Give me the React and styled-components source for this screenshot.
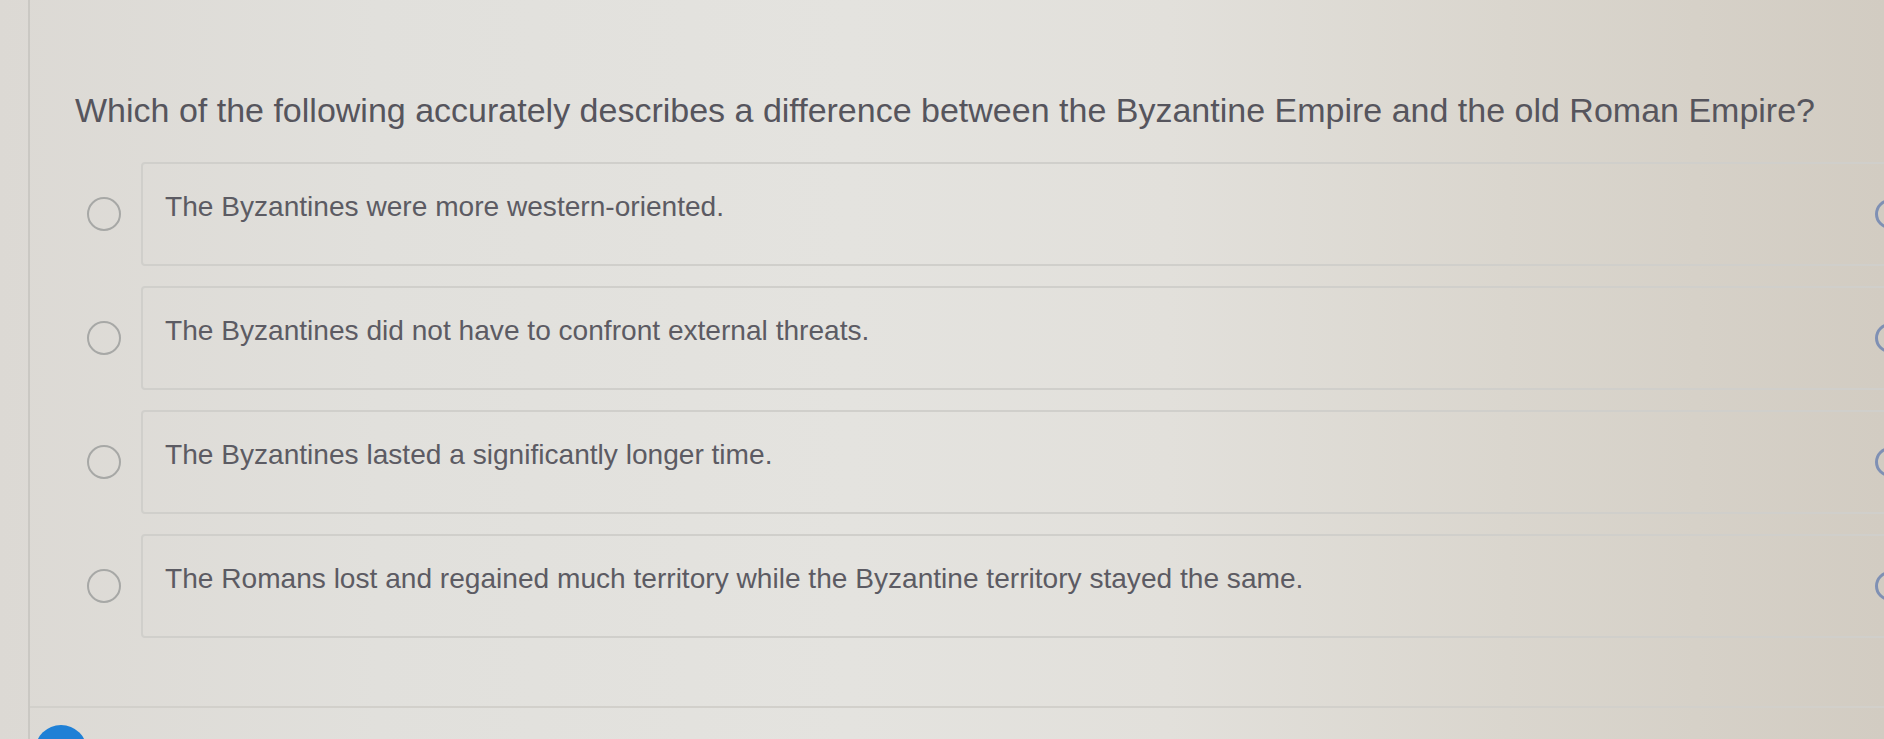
import React from "react";
import styled, { createGlobalStyle } from "styled-components";

const GlobalStyle = createGlobalStyle`
  html, body {
    margin: 0;
    padding: 0;
    height: 739px;
    overflow: hidden;
  }
  body {
    font-family: "Liberation Sans", Arial, sans-serif;
    background: linear-gradient(90deg, #dcd9d4 0%, #e1e0dc 20%, #e4e3df 45%, #e2e0db 62%, #dad6ce 80%, #d2ccc2 100%);
  }
`;

const Page = styled.div`
  display: flex;
  height: 739px;
  padding-left: 28px;
  box-sizing: border-box;
  overflow: hidden;
`;

const Main = styled.main`
  flex: 1;
  display: flex;
  flex-direction: column;
  border-left: 2px solid #cac8c3;
  min-width: 0;
`;

const Question = styled.h1`
  margin: 0;
  padding: 90px 0 0 45px;
  font-size: 34px;
  line-height: 40px;
  font-weight: 400;
  color: #56555d;
  white-space: nowrap;
`;

const OptionList = styled.div`
  display: flex;
  flex-direction: column;
  gap: 20px;
  margin-top: 32px;
  margin-right: -40px;
`;

const OptionRow = styled.label`
  display: flex;
  align-items: center;
  height: 104px;
`;

const Radio = styled.span`
  flex: none;
  width: 30px;
  height: 30px;
  margin-left: 57px;
  margin-right: 20px;
  border: 2.5px solid #a7a8a6;
  border-radius: 50%;
`;

const OptionBox = styled.div`
  flex: 1;
  align-self: stretch;
  display: flex;
  align-items: flex-start;
  border: 2px solid #d0cfcb;
  border-radius: 4px;
  padding: 0 17px 0 22px;
  box-sizing: border-box;
`;

const OptionText = styled.span`
  flex: 1;
  padding-top: 27px;
  font-size: 28.1px;
  line-height: 32px;
  color: #5c5b63;
  white-space: nowrap;
`;

const Eliminate = styled.span`
  flex: none;
  align-self: center;
  width: 24px;
  height: 24px;
  border: 3px solid #7f90b4;
  border-radius: 50%;
`;

const Footer = styled.footer`
  margin-top: 68px;
  border-top: 2px solid #d2d0cb;
  padding: 17px 0 0 5px;
`;

const BlueButton = styled.span`
  display: block;
  width: 52px;
  height: 52px;
  border-radius: 50%;
  background: #1f80d6;
`;

const options = [
  "The Byzantines were more western-oriented.",
  "The Byzantines did not have to confront external threats.",
  "The Byzantines lasted a significantly longer time.",
  "The Romans lost and regained much territory while the Byzantine territory stayed the same.",
];

export default function App() {
  return (
    <>
      <GlobalStyle />
      <Page>
        <Main>
          <Question>
            Which of the following accurately describes a difference between the Byzantine Empire and the old Roman Empire?
          </Question>
          <OptionList>
            {options.map((text) => (
              <OptionRow key={text}>
                <Radio />
                <OptionBox>
                  <OptionText>{text}</OptionText>
                  <Eliminate />
                </OptionBox>
              </OptionRow>
            ))}
          </OptionList>
          <Footer>
            <BlueButton />
          </Footer>
        </Main>
      </Page>
    </>
  );
}
